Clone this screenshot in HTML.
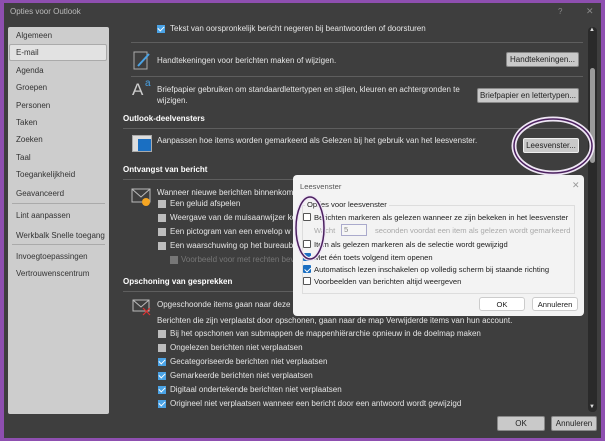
<!DOCTYPE html><html><head><style>
*{margin:0;padding:0;box-sizing:border-box}
body{width:605px;height:441px;background:#8e4fb0;position:relative;overflow:hidden;font-family:"Liberation Sans",sans-serif;font-size:8px}
.win{position:absolute;left:4px;top:3px;width:597px;height:435px;background:#3e3e3e}
.a{position:absolute;white-space:nowrap}
.t{color:#e6e6e6}
.side{position:absolute;left:8px;top:27px;width:101px;height:387px;background:#cdcdcd;border-radius:2px}
.side .a{color:#333;left:8px}
.sep{position:absolute;height:1px;background:#5e5e5e}
.h{color:#fff;font-weight:bold}
.btn{position:absolute;background:#c9c9c9;border:1px solid #888;color:#222;text-align:center;line-height:13px;border-radius:2px}
.cb{position:absolute;width:8px;height:8px;background:#bdbdbd}
.cb.on{background:#4aa3e6}
.cb.on::after{content:"";position:absolute;left:2px;top:0;width:3px;height:5px;border:solid #fff;border-width:0 1.3px 1.3px 0;transform:rotate(45deg)}
.dlg{position:absolute;left:293px;top:175px;width:291px;height:141px;background:#f3f3f3;border-radius:4px;color:#222;font-size:7.6px}
.dcb{position:absolute;width:8px;height:8px;border:1px solid #555;background:#fff;border-radius:1px}
.dcb.on{background:#1a6fc2;border-color:#1a6fc2}
.dcb.on::after{content:"";position:absolute;left:2px;top:0;width:2.5px;height:4.5px;border:solid #fff;border-width:0 1.2px 1.2px 0;transform:rotate(45deg)}
.dbtn{position:absolute;background:#fff;border:1px solid #ccc;border-radius:3px;text-align:center;line-height:13px}
</style></head><body>
<div class="win"></div>
<div class="a" style="left:10px;top:7px;color:#bbb;font-size:8px">Opties voor Outlook</div>
<div class="a" style="left:558px;top:7px;color:#888">?</div>
<div class="a" style="left:586px;top:6px;color:#888;font-size:9px">✕</div>
<div class="side">
<div class="a" style="top:4px">Algemeen</div>
<div style="position:absolute;left:1px;top:17px;width:98px;height:17px;background:#e2e2e2;border:1px solid #aaa;border-radius:2px"></div>
<div class="a" style="top:21px">E-mail</div>
<div class="a" style="top:39px">Agenda</div>
<div class="a" style="top:56px">Groepen</div>
<div class="a" style="top:74px">Personen</div>
<div class="a" style="top:91px">Taken</div>
<div class="a" style="top:108px">Zoeken</div>
<div class="a" style="top:126px">Taal</div>
<div class="a" style="top:143px">Toegankelijkheid</div>
<div class="a" style="top:162px">Geavanceerd</div>
<div style="position:absolute;left:4px;top:176px;width:93px;height:1px;background:#aaa"></div>
<div class="a" style="top:184px">Lint aanpassen</div>
<div class="a" style="top:204px">Werkbalk Snelle toegang</div>
<div style="position:absolute;left:4px;top:217px;width:93px;height:1px;background:#aaa"></div>
<div class="a" style="top:225px">Invoegtoepassingen</div>
<div class="a" style="top:242px">Vertrouwenscentrum</div>
</div>
<div style="position:absolute;left:588px;top:27px;width:9px;height:385px;background:#2a2a2a;border-radius:4px"></div>
<div style="position:absolute;left:590px;top:68px;width:5px;height:95px;background:#9a9a9a;border-radius:3px"></div>
<div class="a" style="left:589px;top:27px;color:#ddd;font-size:6px">▲</div>
<div class="a" style="left:589px;top:404px;color:#ddd;font-size:6px">▼</div>
<div class="cb on" style="left:157px;top:25px"></div>
<div class="a t" style="left:170px;top:24px">Tekst van oorspronkelijk bericht negeren bij beantwoorden of doorsturen</div>
<div class="sep" style="left:131px;top:42px;width:452px"></div>
<svg class="a" style="left:133px;top:51px" width="20" height="20"><rect x="1" y="1" width="13" height="17" fill="none" stroke="#aaa"/><path d="M5 15 L16 3" stroke="#4aa3e6" stroke-width="2"/></svg>
<div class="a t" style="left:157px;top:56px">Handtekeningen voor berichten maken of wijzigen.</div>
<div class="btn" style="left:506px;top:52px;width:73px;height:15px">Handtekeningen...</div>
<div class="sep" style="left:131px;top:76px;width:452px"></div>
<div class="a" style="left:132px;top:80px;color:#ccc;font-size:17px">A</div>
<div class="a" style="left:145px;top:78px;color:#4aa3e6;font-size:10px">a</div>
<div class="a t" style="left:157px;top:84px;line-height:11px">Briefpapier gebruiken om standaardlettertypen en stijlen, kleuren en achtergronden te<br>wijzigen.</div>
<div class="btn" style="left:477px;top:88px;width:102px;height:15px">Briefpapier en lettertypen...</div>
<div class="a h" style="left:123px;top:114px">Outlook-deelvensters</div>
<div class="sep" style="left:123px;top:128px;width:460px"></div>
<svg class="a" style="left:132px;top:135px" width="20" height="18"><rect x="0.5" y="0.5" width="19" height="16" fill="#ddd" stroke="#aaa"/><rect x="6" y="4" width="13" height="12" fill="#1a6fc2"/></svg>
<div class="a t" style="left:157px;top:136px">Aanpassen hoe items worden gemarkeerd als Gelezen bij het gebruik van het leesvenster.</div>
<div class="btn" style="left:523px;top:138px;width:56px;height:15px;border-color:#eee">Leesvenster...</div>
<div class="a h" style="left:123px;top:165px">Ontvangst van bericht</div>
<div class="sep" style="left:123px;top:179px;width:460px"></div>
<svg class="a" style="left:131px;top:187px" width="24" height="20"><rect x="1" y="2" width="18" height="13" fill="none" stroke="#bbb"/><path d="M1 2 L10 10 L19 2" fill="none" stroke="#bbb"/><circle cx="15" cy="15" r="4" fill="#f5a623"/></svg>
<div class="a t" style="left:157px;top:188px">Wanneer nieuwe berichten binnenkomen:</div>
<div class="cb" style="left:158px;top:200px"></div><div class="a t" style="left:170px;top:199px">Een geluid afspelen</div>
<div class="cb" style="left:158px;top:214px"></div><div class="a t" style="left:170px;top:213px">Weergave van de muisaanwijzer ko</div>
<div class="cb" style="left:158px;top:228px"></div><div class="a t" style="left:170px;top:227px">Een pictogram van een envelop w</div>
<div class="cb" style="left:158px;top:242px"></div><div class="a t" style="left:170px;top:241px">Een waarschuwing op het bureaubl</div>
<div class="cb" style="left:170px;top:256px;background:#777"></div><div class="a" style="left:181px;top:255px;color:#777">Voorbeeld voor met rechten bev</div>
<div class="a h" style="left:123px;top:277px">Opschoning van gesprekken</div>
<div class="sep" style="left:123px;top:291px;width:460px"></div>
<svg class="a" style="left:132px;top:298px" width="20" height="18"><rect x="1" y="2" width="16" height="11" fill="none" stroke="#bbb"/><path d="M1 2 L9 9 L17 2" fill="none" stroke="#bbb"/><path d="M11 10 L18 17 M18 10 L11 17" stroke="#d33" stroke-width="1.2"/></svg>
<div class="a t" style="left:157px;top:300px">Opgeschoonde items gaan naar deze map:</div>
<div class="a t" style="left:157px;top:316px">Berichten die zijn verplaatst door opschonen, gaan naar de map Verwijderde items van hun account.</div>
<div class="cb" style="left:158px;top:330px"></div><div class="a t" style="left:170px;top:329px">Bij het opschonen van submappen de mappenhiërarchie opnieuw in de doelmap maken</div>
<div class="cb" style="left:158px;top:344px"></div><div class="a t" style="left:170px;top:343px">Ongelezen berichten niet verplaatsen</div>
<div class="cb on" style="left:158px;top:358px"></div><div class="a t" style="left:170px;top:357px">Gecategoriseerde berichten niet verplaatsen</div>
<div class="cb on" style="left:158px;top:372px"></div><div class="a t" style="left:170px;top:371px">Gemarkeerde berichten niet verplaatsen</div>
<div class="cb on" style="left:158px;top:386px"></div><div class="a t" style="left:170px;top:385px">Digitaal ondertekende berichten niet verplaatsen</div>
<div class="cb on" style="left:158px;top:400px"></div><div class="a t" style="left:170px;top:399px">Origineel niet verplaatsen wanneer een bericht door een antwoord wordt gewijzigd</div>
<div class="btn" style="left:497px;top:416px;width:48px;height:15px">OK</div>
<div class="btn" style="left:551px;top:416px;width:46px;height:15px">Annuleren</div>
<div class="dlg">
<div class="a" style="left:7px;top:7px;color:#555">Leesvenster</div>
<div class="a" style="left:279px;top:5px;color:#999;font-size:9px">✕</div>
<div style="position:absolute;left:9px;top:30px;width:273px;height:89px;border:1px solid #ddd"></div>
<div class="a" style="left:12px;top:25px;background:#f3f3f3;padding:0 2px">Opties voor leesvenster</div>
<div class="dcb" style="left:10px;top:38px"></div><div class="a" style="left:21px;top:38px">Berichten markeren als gelezen wanneer ze zijn bekeken in het leesvenster</div>
<div class="a" style="left:21px;top:51px;color:#aaa">Wacht</div>
<div style="position:absolute;left:48px;top:49px;width:26px;height:12px;border:1px solid #aac;background:#f6f6f6;color:#888;padding-left:2px;line-height:10px">5</div>
<div class="a" style="left:82px;top:51px;color:#aaa">seconden voordat een item als gelezen wordt gemarkeerd</div>
<div class="dcb" style="left:10px;top:65px"></div><div class="a" style="left:21px;top:65px">Item als gelezen markeren als de selectie wordt gewijzigd</div>
<div class="dcb on" style="left:10px;top:78px"></div><div class="a" style="left:21px;top:78px">Met één toets volgend item openen</div>
<div class="dcb on" style="left:10px;top:90px"></div><div class="a" style="left:21px;top:90px">Automatisch lezen inschakelen op volledig scherm bij staande richting</div>
<div class="dcb" style="left:10px;top:102px"></div><div class="a" style="left:21px;top:102px">Voorbeelden van berichten altijd weergeven</div>
<div class="dbtn" style="left:186px;top:122px;width:46px;height:14px">OK</div>
<div class="dbtn" style="left:239px;top:122px;width:46px;height:14px">Annuleren</div>
</div>
<svg style="position:absolute;left:0;top:0" width="605" height="441">
<ellipse cx="553" cy="146" rx="39" ry="27" fill="none" stroke="#efe6f5" stroke-width="5"/>
<ellipse cx="553" cy="146" rx="39" ry="27" fill="none" stroke="#4a1f5e" stroke-width="1.5"/>
<ellipse cx="310" cy="228" rx="14" ry="31" fill="none" stroke="#efe6f5" stroke-width="4"/>
<ellipse cx="310" cy="228" rx="14" ry="31" fill="none" stroke="#4a1f5e" stroke-width="1.5"/>
</svg>
</body></html>
